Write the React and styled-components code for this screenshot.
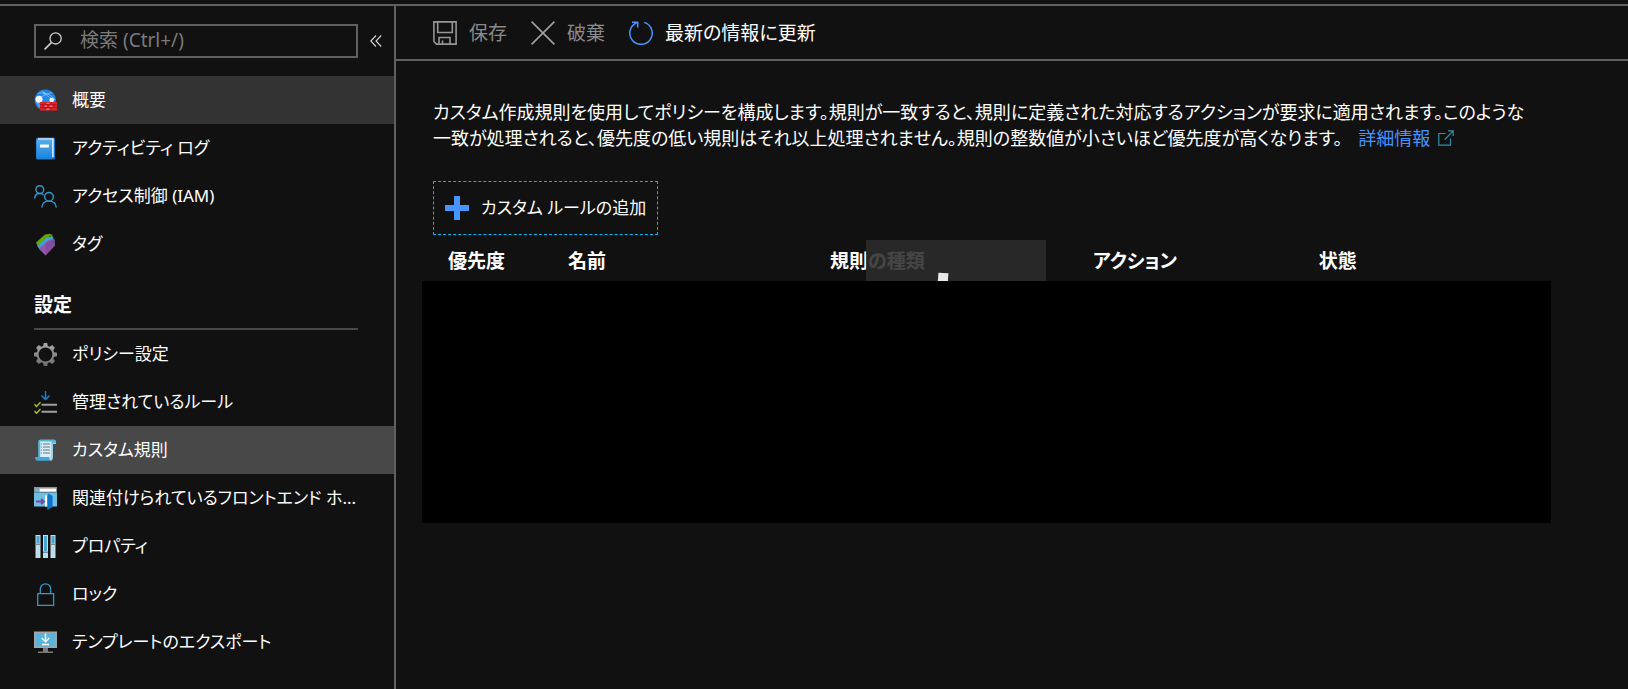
import React from 'react';
import styled, { createGlobalStyle } from 'styled-components';

const GlobalStyle = createGlobalStyle`
  *, *::before, *::after { box-sizing: border-box; }
  body {
    margin: 0;
    background: #111111;
    color: #ffffff;
    font-family: "Noto Sans", "Noto Sans CJK JP", sans-serif;
    font-size: 19px;
    line-height: 26px;
    font-feature-settings: "palt";
  }
  button, input { font: inherit; color: inherit; font-feature-settings: inherit; }
`;

const Page = styled.div`
  display: flex;
  min-height: 100vh;
  padding-top: 4px;
`;

const Sidebar = styled.aside`
  flex: 0 0 396px;
  min-width: 0;
  border-top: 2px solid #606060;
  border-right: 2px solid #606060;
`;

const SearchRow = styled.div`
  display: flex;
  align-items: center;
  padding: 18px 0 18px 34px;
`;

const SearchBox = styled.label`
  flex: 1;
  min-width: 0;
  display: flex;
  align-items: center;
  gap: 18px;
  height: 34px;
  padding: 0 8px;
  border: 2px solid #606060;
  svg { flex: none; }
`;

const SearchInput = styled.input`
  flex: 1;
  min-width: 0;
  height: 28px;
  padding: 0 0 2px;
  border: 0;
  outline: 0;
  background: transparent;
  &::placeholder { color: #7a7a7a; opacity: 1; }
`;

const CollapseButton = styled.button`
  display: flex;
  flex: none;
  align-items: center;
  justify-content: center;
  width: 36px;
  height: 34px;
  padding: 0;
  border: 0;
  background: transparent;
`;

const NavList = styled.ul`
  margin: 0;
  padding: 0;
  list-style: none;
`;

const NavLink = styled.a`
  display: flex;
  align-items: center;
  gap: 15px;
  height: 48px;
  padding: 0 34px;
  color: #ffffff;
  font-size: 17px;
  text-decoration: none;
  white-space: nowrap;
  background: ${({ $tone }) =>
    $tone === 'selected' ? '#484848' : $tone === 'hover' ? '#333333' : 'transparent'};
  svg { flex: none; }
`;

const SectionTitle = styled.h2`
  margin: 0 36px 0 34px;
  padding: 24px 0 10px;
  border-bottom: 2px solid #484848;
  font-size: 19px;
  line-height: 26px;
  font-weight: 700;
`;

const Main = styled.main`
  flex: 1;
  min-width: 0;
  border-top: 2px solid #606060;
`;

const Toolbar = styled.div`
  display: flex;
  align-items: center;
  gap: 24px;
  height: 55px;
  padding-left: 37px;
  border-bottom: 2px solid #606060;
`;

const ToolButton = styled.button`
  display: flex;
  align-items: center;
  gap: 12px;
  padding: 0;
  border: 0;
  background: transparent;
  color: ${({ disabled }) => (disabled ? '#8a8a8a' : '#ffffff')};
`;

const Content = styled.div`
  padding: 38px 77px 0 26px;
`;

const Description = styled.p`
  margin: 0 0 30px 11px;
  font-size: 18px;
`;

const InfoLink = styled.a`
  display: inline-flex;
  align-items: center;
  gap: 8px;
  margin-left: 16px;
  color: #4894fe;
  text-decoration: none;
`;

const AddButton = styled.button`
  display: flex;
  align-items: center;
  gap: 12px;
  height: 54px;
  margin: 0 0 5px 11px;
  padding: 0 11px;
  border: 1px dashed #00b7f0;
  background: transparent;
  font-size: 17px;
`;

const RuleTable = styled.table`
  width: 100%;
  table-layout: fixed;
  border-collapse: collapse;
`;

const HeadCell = styled.th`
  position: relative;
  width: ${({ $width }) => $width};
  height: 41px;
  padding: 0 0 0 ${({ $first }) => ($first ? '26px' : '0')};
  text-align: left;
  font-weight: 700;
  white-space: nowrap;
`;

const Shade = styled.span`
  position: absolute;
  top: 0;
  left: 36px;
  width: 180px;
  height: 41px;
  overflow: hidden;
  background: rgba(43, 43, 43, 0.88);
  &::after {
    content: "";
    position: absolute;
    left: 72px;
    top: 33px;
    width: 10px;
    height: 12px;
    background: #e8e8e8;
    transform: rotate(4deg);
  }
`;

const BlankCell = styled.td`
  height: 242px;
  padding: 0;
  background: #000000;
`;

const Svg = ({ size = 23, children }) => (
  <svg width={size} height={size} viewBox={`0 0 ${size} ${size}`} fill="none" aria-hidden="true">
    {children}
  </svg>
);

const SearchIcon = () => (
  <Svg size={18}>
    <circle cx="11.6" cy="6.4" r="5.6" stroke="#d0d0d0" strokeWidth="1.3" />
    <path d="M7.6 10.4 0.6 17.4" stroke="#d0d0d0" strokeWidth="1.5" />
  </Svg>
);

const CollapseIcon = () => (
  <Svg size={12}>
    <path d="M6 .5.8 6 6 11.5M11.2.5 6 6l5.2 5.5" stroke="#d8d8d8" strokeWidth="1.1" />
  </Svg>
);

const FirewallIcon = () => (
  <Svg>
    <defs>
      <linearGradient id="globe" x1="0" y1="0" x2="0" y2="1">
        <stop offset="0" stopColor="#1a7fe0" /><stop offset="1" stopColor="#2b9af3" />
      </linearGradient>
    </defs>
    <circle cx="11.3" cy="11" r="10.6" fill="url(#globe)" />
    <path d="M4 4.500C9 2.500 17 5 21 11M18 3.500C12 5 8 7 5 10M8 1.500C11 5 15 8 17.500 10M3 13C5 17 7 19 9 20" stroke="#6db8f5" strokeWidth="1" />
    <circle cx="5" cy="10.300" r="3.500" fill="#f4f8fc" />
    <circle cx="17.700" cy="11" r="2.300" fill="#f4f8fc" />
    <circle cx="10.600" cy="4.500" r="1.200" fill="#83c5f8" />
    <path d="M6 13h17v8.500H6z" fill="#e0232a" />
    <path d="M6 15.600h17M6 18.600h17M11 13v2.600M17 13v2.600M14 15.600v3M20 15.600v3M9 15.600v3M11 18.600v3M17 18.600v3" stroke="#b5151b" strokeWidth="1" />
    <path d="M12.500 14.300h3M10.500 17.200h2.500M15.500 17.200h3M12.500 20.200h3" stroke="#ff8b90" strokeWidth="1" />
  </Svg>
);

const LogIcon = () => (
  <Svg>
    <defs>
      <linearGradient id="book" x1="0" y1="0" x2="0" y2="1">
        <stop offset="0" stopColor="#55adef" /><stop offset="1" stopColor="#1a82dd" />
      </linearGradient>
    </defs>
    <rect x="2" y=".5" width="19" height="22" rx="1.500" fill="#1672c4" />
    <path d="M4 1.300h15.700v19H4z" fill="#e8f3fb" />
    <path d="M2.500 2.500h15.700v19.500H4a1.500 1.500 0 0 1-1.500-1.500z" fill="url(#book)" />
    <path d="M6 7.500h9v3H6z" fill="#ffffff" />
  </Svg>
);

const PeopleIcon = () => (
  <Svg>
    <g stroke="#3099cb" strokeWidth="1.400">
      <circle cx="5.800" cy="4.600" r="3.900" />
      <path d="M.7 13.500c0-3.300 2.200-5 5-5 1.800 0 3 .6 3.800 1.500" />
      <circle cx="15" cy="11.800" r="4.300" />
      <path d="M7.700 22.500c.4-4.100 3.500-6.400 7.300-6.400s6.900 2.300 7.300 6.400" />
    </g>
  </Svg>
);

const TagIcon = () => (
  <Svg>
    <path d="M2 9.500 11 1.500 16 .8 18.500 2 18 5.500 4.500 14.500z" fill="#62a40a" />
    <path d="M3.200 13 13 4.500 19 3.500l1 5L6.500 17.500z" fill="#3fa3d8" />
    <path d="M4.700 15.500 15.500 6.500 20.500 6.200 21 12.500 11.500 22.500z" fill="#9158ac" />
    <path d="M11.500 10v12.500L21 12.500 20.500 6.200z" fill="#7d459a" opacity=".6" />
    <circle cx="18.300" cy="9" r="1.300" fill="#2d6f9e" />
    <circle cx="16" cy="3.300" r=".9" fill="#335d08" />
  </Svg>
);

const GearIcon = () => (
  <Svg>
    <defs>
      <linearGradient id="gear" x1="0" y1="0" x2="0" y2="1">
        <stop offset="0" stopColor="#a8a8a8" /><stop offset="1" stopColor="#6f6f6f" />
      </linearGradient>
    </defs>
    <path
      fill="url(#gear)"
      fillRule="evenodd"
      d="M9.800 0h3.400l.6 2.900 1.900.8L18.200 2.100l2.700 2.700-1.600 2.500.8 1.900 2.900.6v3.400l-2.900.6-.8 1.900 1.600 2.500-2.700 2.700-2.500-1.600-1.900.8-.6 2.900H9.800l-.6-2.900-1.900-.8-2.500 1.600-2.700-2.700 1.600-2.500-.8-1.900L0 13.200V9.800l2.900-.6.8-1.900L2.100 4.800l2.700-2.700 2.500 1.600 1.900-.8zM11.500 4.600a6.900 6.900 0 1 0 0 13.800 6.900 6.900 0 0 0 0-13.800z"
    />
  </Svg>
);

const ManagedIcon = () => (
  <Svg>
    <path d="M11.500 0v8M7.500 4.400l4 4 4-4" stroke="#1580d8" strokeWidth="1.400" />
    <path d="M.5 13.300l2 2.200 4-4.200M.5 20l2 2.200 4-4.200" stroke="#a4c616" strokeWidth="1.500" />
    <path d="M7.500 13.700H23M7.500 20.700H23" stroke="#a0a0a0" strokeWidth="2" />
  </Svg>
);

const ScrollIcon = () => (
  <Svg>
    <path d="M5 1h15l1.800 1.500V5H19v13H5z" fill="#d8eef9" />
    <path d="M5.500 1c-1 .4-1.300 1.200-1.300 2.200V18h2V3z" fill="#5ab4dc" />
    <path d="M6 .5h14c1.400 0 2 1 2 2.200v1.500h-3.500v14h-1V2.500H5z" fill="#5ab4dc" />
    <path d="M1 18h14c0 2 .8 3.500 2 3.700H3.200C1.800 21.500 1 20 1 18z" fill="#44a7d6" />
    <path d="M15 18h3.800c0 2.200-.6 3.500-1.800 3.700C15.800 21.500 15 20 15 18z" fill="#b5def2" />
    <path d="M9 5h7M9 8h7M9 11h7M9 14h7" stroke="#68797f" strokeWidth="1" />
    <path d="M6.700 5H8M6.700 8H8M6.700 11H8M6.700 14H8" stroke="#3c99c9" strokeWidth="1" />
  </Svg>
);

const FrontendIcon = () => (
  <Svg>
    <path d="M0 0h23v5.500H0z" fill="#929292" />
    <path d="M5.500 1.600h16.500v3H5.500z" fill="#ffffff" />
    <path d="M1.200 1.600h4v3h-4z" fill="#61b9df" />
    <path d="M0 5.500h23v14H0z" fill="#6fbfe3" />
    <path d="M11 8.500h3v11h-3z" fill="#ffffff" />
    <path d="M13.200 9 14.500 6.500 18.600 9v11l-5.400 3z" fill="#0b74cc" />
    <path d="M2 14.500h8M7 12l3 2.500L7 17" stroke="#83439b" strokeWidth="1.800" />
  </Svg>
);

const PropertiesIcon = () => (
  <Svg>
    {[1.5, 9, 16.5].map((x, i) => (
      <React.Fragment key={x}>
        <path d={`M${x} 0h5v23h-5z`} fill="#d3d9dc" />
        <path d={`M${x + 1} 1h3v${i === 1 ? 15 : 7}h-3z`} fill="#42a7d5" />
        <path d={`M${x} ${i === 1 ? 16.500 : 8.500}h5v1.500h-5z`} fill="#858585" />
        <path d={`M${x + 1} ${i === 1 ? 19 : 11}h3v${i === 1 ? 3.500 : 11.500}h-3z`} fill="#b5e0f2" />
      </React.Fragment>
    ))}
  </Svg>
);

const LockIcon = () => (
  <Svg>
    <path d="M3.700 10.700h15.900v11.600H3.700zM6.300 10.700V6a5.200 5.200 0 0 1 10.400 0v4.700" stroke="#3099cb" strokeWidth="1.300" />
  </Svg>
);

const ExportIcon = () => (
  <Svg>
    <path d="M0 .5h23v16.500H0z" fill="#a4a4a4" />
    <path d="M1.500 2h20v13.500h-20z" fill="#58b4dc" />
    <path d="M11.500 2.500v8M7.800 7l3.700 3.700L15.200 7M8 13.500h7" stroke="#ffffff" strokeWidth="1.400" />
    <path d="M9 17h5v3.500h5V22H4v-1.500h5z" fill="#7a7a7a" />
  </Svg>
);

const SaveIcon = () => (
  <Svg size={24}>
    <path d="M.9.9h22.200v22.200H3.500L.9 20.500zM4.700.9v10.600h14.600V.9M6 23v-6.500h11V23M9.500 23v-3.500" stroke="#969696" strokeWidth="1.600" />
  </Svg>
);

const DiscardIcon = () => (
  <Svg size={24}>
    <path d="M.6.6l22.800 22.800M23.400.6.6 23.400" stroke="#a0a0a0" strokeWidth="1.600" />
  </Svg>
);

const RefreshIcon = () => (
  <Svg size={24}>
    <path d="M15.200 1.400a11.200 11.200 0 1 1-7.500.4" stroke="#4894fe" strokeWidth="1.500" />
    <path d="M3 1.200h5.700v5.400" stroke="#4894fe" strokeWidth="1.500" />
  </Svg>
);

const PlusIcon = () => (
  <Svg size={24}>
    <path d="M9 0h6v9h9v6h-9v9H9v-9H0V9h9z" fill="#4894fe" />
  </Svg>
);

const ExternalIcon = () => (
  <Svg size={16}>
    <path d="M7.500 3.500H.8v11.700h11.700V8.500M10 .8h5.200V6M15.200.8 6.800 9.500" stroke="#2f8fb0" strokeWidth="1.200" />
  </Svg>
);

const overviewItems = [
  { label: '概要', Icon: FirewallIcon, tone: 'hover' },
  { label: 'アクティビティ ログ', Icon: LogIcon },
  { label: 'アクセス制御 (IAM)', Icon: PeopleIcon },
  { label: 'タグ', Icon: TagIcon },
];

const settingItems = [
  { label: 'ポリシー設定', Icon: GearIcon },
  { label: '管理されているルール', Icon: ManagedIcon },
  { label: 'カスタム規則', Icon: ScrollIcon, tone: 'selected' },
  { label: '関連付けられているフロントエンド ホ...', Icon: FrontendIcon },
  { label: 'プロパティ', Icon: PropertiesIcon },
  { label: 'ロック', Icon: LockIcon },
  { label: 'テンプレートのエクスポート', Icon: ExportIcon },
];

const Nav = ({ items }) => (
  <NavList>
    {items.map(({ label, Icon, tone }) => (
      <li key={label}>
        <NavLink href="#" $tone={tone} aria-current={tone === 'selected' ? 'page' : undefined}>
          <Icon />
          <span>{label}</span>
        </NavLink>
      </li>
    ))}
  </NavList>
);

export default function App() {
  return (
    <>
      <GlobalStyle />
      <Page>
        <Sidebar>
          <SearchRow>
            <SearchBox>
              <SearchIcon />
              <SearchInput type="text" placeholder="検索 (Ctrl+/)" aria-label="検索" />
            </SearchBox>
            <CollapseButton type="button" aria-label="折りたたむ">
              <CollapseIcon />
            </CollapseButton>
          </SearchRow>
          <Nav items={overviewItems} />
          <SectionTitle>設定</SectionTitle>
          <Nav items={settingItems} />
        </Sidebar>
        <Main>
          <Toolbar>
            <ToolButton type="button" disabled><SaveIcon />保存</ToolButton>
            <ToolButton type="button" disabled><DiscardIcon />破棄</ToolButton>
            <ToolButton type="button"><RefreshIcon />最新の情報に更新</ToolButton>
          </Toolbar>
          <Content>
            <Description>
              カスタム作成規則を使用してポリシーを構成します。規則が一致すると、規則に定義された対応するアクションが要求に適用されます。このような
              <br />
              一致が処理されると、優先度の低い規則はそれ以上処理されません。規則の整数値が小さいほど優先度が高くなります。
              <InfoLink href="#">詳細情報<ExternalIcon /></InfoLink>
            </Description>
            <AddButton type="button"><PlusIcon />カスタム ルールの追加</AddButton>
            <RuleTable>
              <thead>
                <tr>
                  <HeadCell $width="146px" $first>優先度</HeadCell>
                  <HeadCell $width="23.2%">名前</HeadCell>
                  <HeadCell $width="23.3%">規則の種類<Shade /></HeadCell>
                  <HeadCell $width="20%">アクション</HeadCell>
                  <HeadCell>状態</HeadCell>
                </tr>
              </thead>
              <tbody>
                <tr><BlankCell colSpan={5} /></tr>
              </tbody>
            </RuleTable>
          </Content>
        </Main>
      </Page>
    </>
  );
}
